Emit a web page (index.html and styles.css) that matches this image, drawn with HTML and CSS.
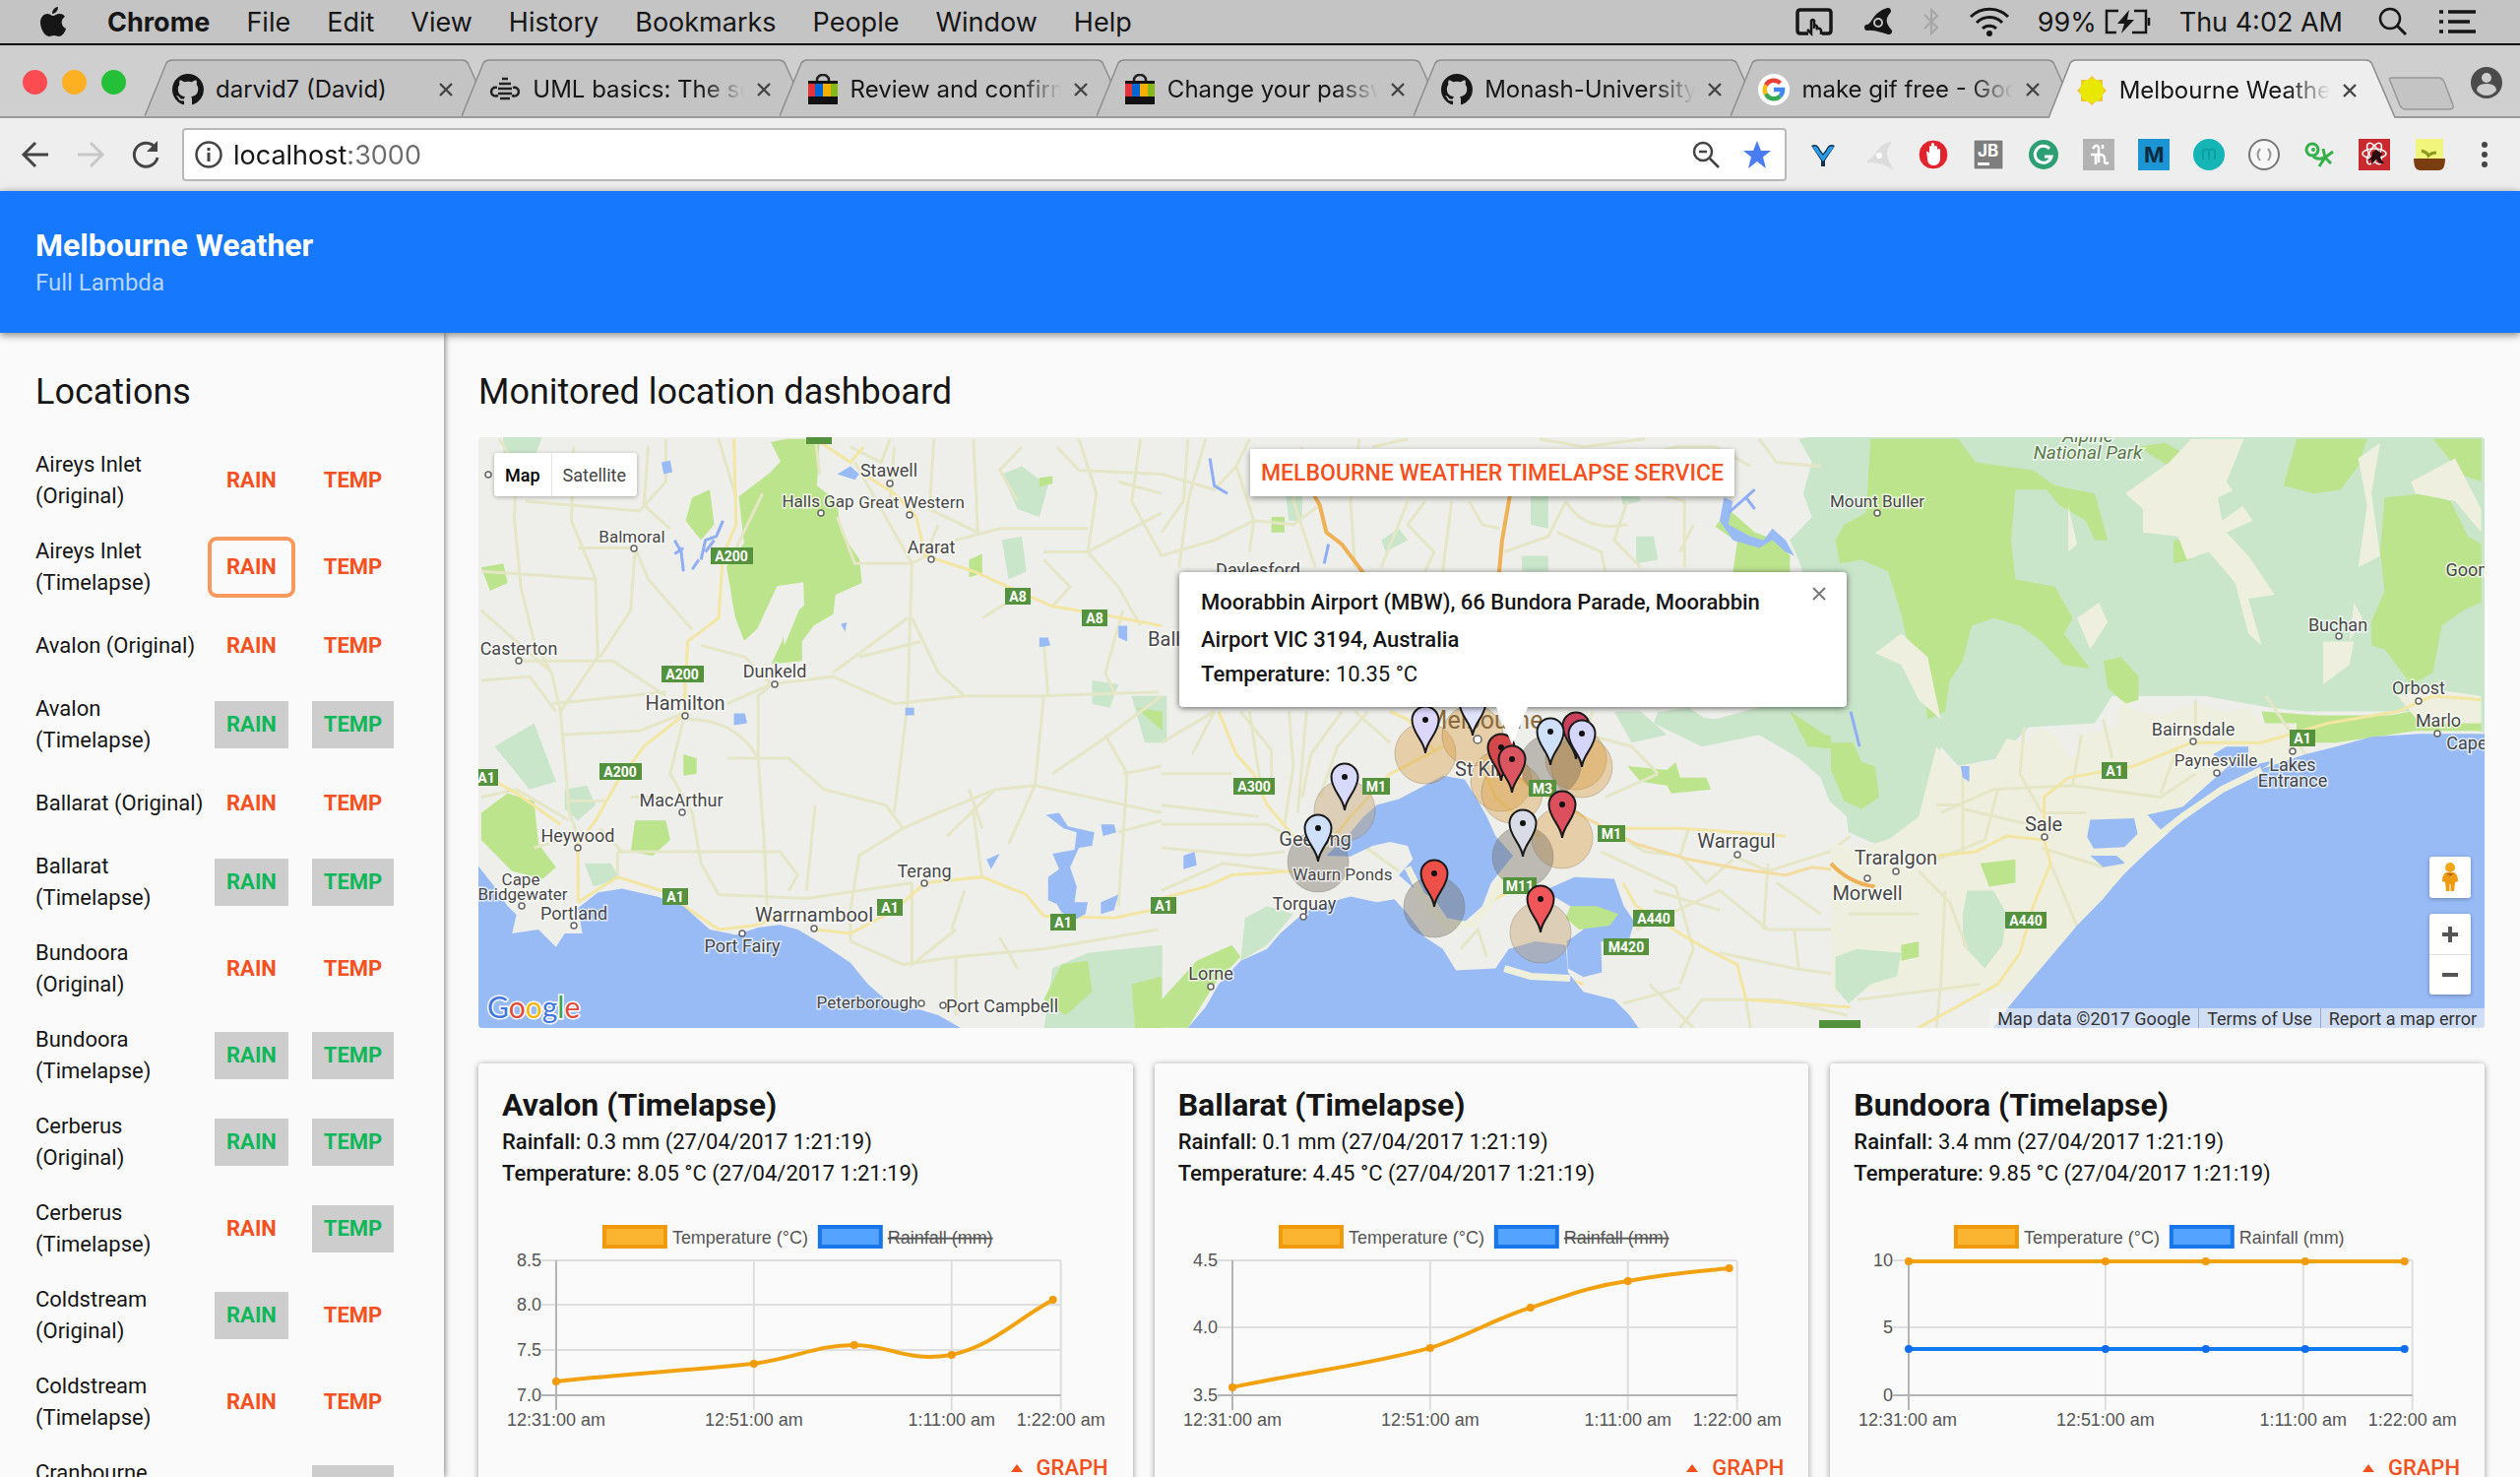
FILE: index.html
```html
<!DOCTYPE html>
<html lang="en">
<head>
<meta charset="utf-8">
<title>Melbourne Weather</title>
<link rel="stylesheet" href="styles.css">
</head>
<body>
<svg class="defs" aria-hidden="true">
  <defs>
    <symbol id="close" viewBox="0 0 16 16"><path d="M2 2l12 12M14 2L2 14" stroke="#444" stroke-width="2.4" fill="none"/></symbol>
    <symbol id="tab-shape" viewBox="0 0 352 58" preserveAspectRatio="none"><path d="M0 58L22 4Q24 1 28 1H322Q326 1 328 4L352 58" stroke="#8e8e8e" stroke-width="1.5"/></symbol>
    <symbol id="github" viewBox="0 0 16 16"><path fill="#161616" d="M8 0C3.58 0 0 3.58 0 8c0 3.54 2.29 6.53 5.47 7.59.4.07.55-.17.55-.38 0-.19-.01-.82-.01-1.49-2.01.37-2.53-.49-2.69-.94-.09-.23-.48-.94-.82-1.13-.28-.15-.68-.52-.01-.53.63-.01 1.08.58 1.23.82.72 1.21 1.87.87 2.33.66.07-.52.28-.87.51-1.07-1.78-.2-3.64-.89-3.64-3.95 0-.87.31-1.59.82-2.15-.08-.2-.36-1.02.08-2.12 0 0 .67-.21 2.2.82.64-.18 1.32-.27 2-.27s1.36.09 2 .27c1.53-1.04 2.2-.82 2.2-.82.44 1.1.16 1.92.08 2.12.51.56.82 1.27.82 2.15 0 3.07-1.87 3.75-3.65 3.95.29.25.54.73.54 1.48 0 1.07-.01 1.93-.01 2.2 0 .21.15.46.55.38A8.01 8.01 0 0 0 16 8c0-4.42-3.58-8-8-8z"/></symbol>
    <symbol id="bag" viewBox="0 0 32 32"><path d="M10 9V6a6 5 0 0 1 12 0v3" fill="none" stroke="#222" stroke-width="2.5"/><path d="M1 8h7v16H1z" fill="#e53238"/><path d="M8 8h8v16H8z" fill="#0064d2"/><path d="M16 8h8v16h-8z" fill="#f5af02"/><path d="M24 8h7v16h-7z" fill="#86b817"/><path d="M1 23h30v8H1zM1 7h30v3H1z" fill="#111"/></symbol>
    <symbol id="pin" viewBox="-16 -50 32 52" overflow="visible"><path d="M0 0C-1-13-13.500-20-13.500-34A13.500 13.500 0 1 1 13.500-34C13.500-20 1-13 0 0Z" stroke="#1a1a1a" stroke-width="2"/><circle cy="-34" r="3" fill="#111"/></symbol>
  </defs>
</svg>

<header class="menubar">
  <nav class="menus">
    <svg class="apple" viewBox="0 0 28 32"><path fill="#161616" d="M19 1c0 4-3 7-6 7 0-4 3-7 6-7zM14 10c2 0 3-2 7-2 2 0 4 1 5 3-5 3-4 10 1 12-1 4-4 8-7 8-2 0-3-1-5-1s-3 1-5 1c-5 0-9-9-9-14 0-6 4-9 7-9 3 0 4 2 6 2z"/></svg>
    <strong>Chrome</strong><span>File</span><span>Edit</span><span>View</span><span>History</span><span>Bookmarks</span><span>People</span><span>Window</span><span>Help</span>
  </nav>
  <div class="status">
    <svg width="38" height="30" viewBox="0 0 38 30"><path d="M13 27H5q-3 0-3-3V6q0-3 3-3h28q3 0 3 3v18q0 3-3 3h-6" fill="none" stroke="#161616" stroke-width="3.500"/><path d="M12 23l4 4V14q2-2 3 0v8-3q3-1 3 2v1q3-1 4 2v4" fill="none" stroke="#161616" stroke-width="2.500"/></svg>
    <svg width="34" height="32" viewBox="0 0 34 32"><path d="M7 22C15 21 13 9 28 5C22 12 22 18 29 26C21 24 14 21 7 22Z" fill="#161616" stroke="#161616" stroke-width="6" stroke-linejoin="round"/><circle cx="18" cy="17" r="4" fill="#161616" stroke="#c4c4c4" stroke-width="2"/></svg>
    <svg width="20" height="30" viewBox="0 0 20 30"><path d="M3 8l13 13-6 6V3l6 6L3 22" fill="none" stroke="#a6a6a6" stroke-width="2"/></svg>
    <svg width="42" height="30" viewBox="0 0 42 30"><g fill="none" stroke="#161616" stroke-width="3"><path d="M2 10a27 27 0 0 1 38 0"/><path d="M8 16a18 18 0 0 1 26 0"/><path d="M14 22a10 10 0 0 1 14 0"/></g><circle cx="21" cy="27" r="3" fill="#161616"/></svg>
    <span>99%</span>
    <svg class="battery" width="48" height="26" viewBox="0 0 48 26"><path d="M14 2H2v22h10M30 2h12v22H28M45 9v8" fill="none" stroke="#161616" stroke-width="2.500"/><path d="M25 1L13 15h7l-3 10 13-14h-7z" fill="#161616"/></svg>
    <span class="clock">Thu 4:02 AM</span>
    <svg class="search" width="30" height="30" viewBox="0 0 30 30"><circle cx="12" cy="12" r="10" fill="none" stroke="#161616" stroke-width="2.500"/><path d="M19 19l9 9" stroke="#161616" stroke-width="3"/></svg>
    <svg class="list" width="38" height="26" viewBox="0 0 38 26"><path d="M0 3h4M0 13h4M0 23h4M9 3h28M9 13h22M9 23h28" stroke="#161616" stroke-width="3.500"/></svg>
  </div>
</header>

<div class="tabstrip">
  <div class="lights"><i class="red"></i><i class="amber"></i><i class="green"></i></div>
  <div class="tabs">
    <div class="tab"><svg class="shape"><use href="#tab-shape"/></svg><svg class="fav"><use href="#github"/></svg><span>darvid7 (David)</span><button aria-label="Close tab"><svg><use href="#close"/></svg></button></div>
    <div class="tab"><svg class="shape"><use href="#tab-shape"/></svg><svg class="fav" viewBox="0 0 32 32"><g stroke="#222" stroke-width="2.500" fill="none"><path d="M10 10h12M9 15h14M9 20h14M11 25h10M13 5h6"/><path d="M8 14c-8-2-8 11 1 8M24 14c8-2 8 11-1 8"/></g></svg><span>UML basics: The sequence diagram</span><button aria-label="Close tab"><svg><use href="#close"/></svg></button></div>
    <div class="tab"><svg class="shape"><use href="#tab-shape"/></svg><svg class="fav"><use href="#bag"/></svg><span>Review and confirm details</span><button aria-label="Close tab"><svg><use href="#close"/></svg></button></div>
    <div class="tab"><svg class="shape"><use href="#tab-shape"/></svg><svg class="fav"><use href="#bag"/></svg><span>Change your password now</span><button aria-label="Close tab"><svg><use href="#close"/></svg></button></div>
    <div class="tab"><svg class="shape"><use href="#tab-shape"/></svg><svg class="fav"><use href="#github"/></svg><span>Monash-University projects</span><button aria-label="Close tab"><svg><use href="#close"/></svg></button></div>
    <div class="tab"><svg class="shape"><use href="#tab-shape"/></svg><svg class="fav" viewBox="0 0 32 32"><circle cx="16" cy="16" r="16" fill="#fff"/><g fill="none" stroke-width="4.500"><path d="M22.500 9.500A9 9 0 0 0 8 11.500" stroke="#ea4335"/><path d="M8 11.500a9 9 0 0 0 0 9" stroke="#fbbc05"/><path d="M8 20.500a9 9 0 0 0 14.500 2" stroke="#34a853"/><path d="M22.500 22.500A9 9 0 0 0 25 16h-9" stroke="#4285f4"/></g></svg><span>make gif free - Google Search</span><button aria-label="Close tab"><svg><use href="#close"/></svg></button></div>
    <div class="tab active"><svg class="shape"><use href="#tab-shape"/></svg><svg class="fav" viewBox="0 0 32 32"><path d="M16 1l4 4 7 0v7l4 4-4 4v7l-7 0-4 4-4-4-7 0v-7l-4-4 4-4V5l7 0z" fill="#f3c13a"/><circle cx="16" cy="16" r="12" fill="#e8e800"/></svg><span>Melbourne Weather</span><button aria-label="Close tab"><svg><use href="#close"/></svg></button></div>
  </div>
  <button class="newtab" aria-label="New tab"><svg width="70" height="34" viewBox="0 0 70 34"><path d="M3 4q-2-3 2-3h47q4 0 6 4l9 24q1 4-4 4H19q-4 0-6-4z" fill="#c4c4c4" stroke="#989898" stroke-width="1.500"/></svg></button>
  <svg class="profile" viewBox="0 0 32 32"><circle cx="16" cy="16" r="16" fill="#4b4b4b"/><circle cx="16" cy="11" r="5" fill="#cdcdcd"/><path d="M6 24q0-7 10-7t10 7q-4 5-10 5T6 24z" fill="#cdcdcd"/></svg>
</div>

<div class="toolbar">
  <button aria-label="Back"><svg viewBox="0 0 32 32"><path d="M29 16H4M16 4L4 16l12 12" fill="none" stroke="#444" stroke-width="3"/></svg></button>
  <button aria-label="Forward"><svg viewBox="0 0 32 32"><path d="M3 16h25M16 4l12 12-12 12" fill="none" stroke="#c8c8c8" stroke-width="3"/></svg></button>
  <button aria-label="Reload"><svg viewBox="0 0 32 32"><path d="M26 9a12 12 0 1 0 2 10" fill="none" stroke="#444" stroke-width="3"/><path d="M28 2v11H17z" fill="#444"/></svg></button>
  <div class="omnibox">
    <svg viewBox="0 0 28 28"><circle cx="14" cy="14" r="12.500" fill="none" stroke="#444" stroke-width="2.500"/><path d="M14 12v9M14 7v3" stroke="#444" stroke-width="3"/></svg>
    <input class="url" type="text" value="localhost:3000" aria-label="Address">
    <svg viewBox="0 0 28 28"><circle cx="11" cy="11" r="9" fill="none" stroke="#444" stroke-width="2.500"/><path d="M7 11h8M18 18l9 9" stroke="#444" stroke-width="2.500"/></svg>
    <svg viewBox="0 0 28 28" class="star"><path d="M14 0l4 10h10l-8 6.500L23 28l-9-7-9 7 3-11.500L0 10h10z" fill="#4a7df4"/></svg>
  </div>
  <div class="ext">
    <svg viewBox="0 0 32 32"><path d="M4 7q6-3 9 4l3 4 3-4q3-7 9-4l-10 15v6h-4v-6z" fill="#12324e"/><path d="M5 8q5-2 7 4l4 5 4-5q2-6 7-4L16 23z" fill="#2a9be6"/></svg>
    <svg viewBox="0 0 32 32"><path d="M5 23C15 22 13 9 27 5C22 12 22 18 28 28C21 24 14 22 5 23Z" fill="#dcdcdc" stroke="#dcdcdc" stroke-width="3"/><circle cx="17" cy="17" r="3" fill="#fff"/></svg>
    <svg viewBox="0 0 32 32"><circle cx="16" cy="16" r="15" fill="#e0252f" stroke="#fff"/><path d="M9 13q2-1 3 2V8q1-2 2 0V5q1-2 3 0v3q1-2 3 0v3q2-2 3 0v10q-1 6-7 6t-6-7z" fill="#fff"/></svg>
    <svg viewBox="0 0 32 32"><path d="M1 1h30v30H1z" fill="#7e7e7e" stroke="#fff"/><text x="5" y="18" class="glyph" font-size="17" fill="#fff">JB</text><path d="M5 24h12v3H5z" fill="#fff"/></svg>
    <svg viewBox="0 0 32 32"><circle cx="16" cy="16" r="15" fill="#2e9f74"/><path d="M22 10a8.500 8.500 0 1 0 2 8h-7" fill="none" stroke="#fff" stroke-width="3"/></svg>
    <svg viewBox="0 0 32 32"><path d="M0 0h32v32H0z" fill="#b3b3b3"/><path d="M10 10q4-6 6-1v15M8 16h10q5 0 4 8 1 2 4 0M20 6v4M13 16v10" fill="none" stroke="#fff" stroke-width="2.500"/></svg>
    <svg viewBox="0 0 32 32"><path d="M0 0h32v32H0z" fill="#1b95d3"/><text x="6" y="24" class="glyph" font-size="22" fill="#0c2c40">M</text></svg>
    <svg viewBox="0 0 32 32"><circle cx="16" cy="16" r="16" fill="#16b5b5"/><path d="M10 21V12q3-3 6 0v9M16 12q3-3 6 0v9" fill="none" stroke="#0b9ea6" stroke-width="2"/></svg>
    <svg viewBox="0 0 32 32"><circle cx="16" cy="16" r="15" fill="#f7f7f7" stroke="#777" stroke-width="2"/><path d="M12 10q-5 6 0 12M20 10q5 6 0 12" fill="none" stroke="#999" stroke-width="2"/></svg>
    <svg viewBox="0 0 32 32"><g fill="none" stroke="#36b04a" stroke-width="3"><circle cx="9" cy="11" r="6"/><path d="M10 18q5 4 12 1M16 28l6-9M20 10l2 9 8-6M22 19l6 6"/></g><circle cx="10" cy="11" r="2" fill="#36b04a"/></svg>
    <svg viewBox="0 0 32 32"><path d="M0 0h32v32H0z" fill="#c92a2f"/><g fill="none" stroke="#fff" stroke-width="1.500"><ellipse cx="16" cy="15" rx="12" ry="5"/><ellipse cx="16" cy="15" rx="12" ry="5" transform="rotate(60 16 15)"/><ellipse cx="16" cy="15" rx="12" ry="5" transform="rotate(120 16 15)"/></g><path d="M14 14l4-3 6 4-2 4 4 6h-4l-4-4-5 5v-5l-4 1 5-5z" fill="#2b0d0f"/></svg>
    <svg viewBox="0 0 32 32"><path d="M2 0h28v20H2z" fill="#f1f57c"/><path d="M8 12q6 2 7 5 3-3 8-3" fill="none" stroke="#8b9a1e" stroke-width="3"/><path d="M0 20h32q0 12-6 12H6q-6 0-6-12z" fill="#7a3d10"/></svg>
  </div>
  <button class="more" aria-label="Menu"><svg viewBox="0 0 32 32"><circle cx="16" cy="6" r="3"/><circle cx="16" cy="16" r="3"/><circle cx="16" cy="26" r="3"/></svg></button>
</div>

<div class="app">
  <header class="appbar"><h1>Melbourne Weather</h1><p>Full Lambda</p></header>
  <div class="columns">
    <aside class="sidebar">
      <h2>Locations</h2>
      <ul>
        <li><span>Aireys Inlet (Original)</span><button>RAIN</button><button>TEMP</button></li>
        <li><span>Aireys Inlet (Timelapse)</span><button class="focus">RAIN</button><button>TEMP</button></li>
        <li><span>Avalon (Original)</span><button>RAIN</button><button>TEMP</button></li>
        <li><span>Avalon (Timelapse)</span><button class="on">RAIN</button><button class="on">TEMP</button></li>
        <li><span>Ballarat (Original)</span><button>RAIN</button><button>TEMP</button></li>
        <li><span>Ballarat (Timelapse)</span><button class="on">RAIN</button><button class="on">TEMP</button></li>
        <li><span>Bundoora (Original)</span><button>RAIN</button><button>TEMP</button></li>
        <li><span>Bundoora (Timelapse)</span><button class="on">RAIN</button><button class="on">TEMP</button></li>
        <li><span>Cerberus (Original)</span><button class="on">RAIN</button><button class="on">TEMP</button></li>
        <li><span>Cerberus (Timelapse)</span><button>RAIN</button><button class="on">TEMP</button></li>
        <li><span>Coldstream (Original)</span><button class="on">RAIN</button><button>TEMP</button></li>
        <li><span>Coldstream (Timelapse)</span><button>RAIN</button><button>TEMP</button></li>
        <li><span>Cranbourne (Original)</span><button>RAIN</button><button class="on">TEMP</button></li>
      </ul>
    </aside>
    <main class="main">
      <h2>Monitored location dashboard</h2>
      <section class="map" aria-label="Map">
        <svg class="canvas" viewBox="0 0 2038 600" preserveAspectRatio="xMidYMid slice">
          <rect width="2038" height="600" fill="#eeeeea"/>
          <!-- western tile -->
          <g class="tile" transform="translate(-6 -14) scale(.4464 .3954)">
            <g class="pale">
              <path d="M50 830l90-60 30 90 20 60-60 20-50-70zM210 940l50-10 20 50-40 40-30-30zM255 1130l60 0 20 40-60 20zM1205 130l45-20 60 50-20 80-50-20zM1205 300l45-10 10 90-40 20zM1500 700l80 0v120h-50zM1320 1400l80-40 170-20v220h-270zM70 30l90 0-20 60-70-10zM1410 660l60 10-20 60-40-10z"/>
            </g>
            <g class="wood">
              <path d="M715 40h75l-6 120 45 40 10 80 42 70 5 60-60 30-5 50-45 30-26 40v50l-70 8 25-60 5-50 45-40-2-60-60 10-45 110-30 30-20-60-20-130 40-60-12-120 70-60 25-30-22-50z"/>
              <path d="M500 190l40-20 10 90-30 40-35-50zM20 1000l60-50 60 20 10 110 40 60-30 30-70-20-70-80zM370 1020l70 0 10 50-40 40-50-10zM480 850l30 10v40l-30 5zM20 370l50-10 10 50-40 20zM1340 1390l60-10 10 80-60 60-50-40zM1500 1440l68-20v140h-60zM1290 140l30-5v20l-30 8zM1130 350l30-15v50l-30 10zM1510 730l60 10v50z"/>
            </g>
            <path class="bare" d="M700 500l50-40-40 110z"/>
            <g class="minor">
              <path d="M60 40L100 110 95 240 110 420 140 560 180 640 200 740 210 860 220 1000 240 1060M230 60L225 250 280 400 285 600 200 740M120 200L380 225 440 150 440 40M370 320L400 400 500 530M370 320L360 480 290 600M400 60l-10 150 60 60M560 40l40 150M110 610L320 610 440 700M180 720L440 690M200 800L380 790 490 740M480 760L450 900 500 1000 520 1130 560 1210M490 760Q600 760 650 860M650 860L650 700 680 670M650 860L665 1100 670 1240M580 860L720 860 800 940 940 980 980 1040M680 670L820 650 960 720 1120 700 1300 700 1560 690M520 570L620 600 680 670M580 720L680 670M820 640L990 500M1000 360L990 720 960 1000M1000 500L1060 640 1120 700M980 1040L880 1110 860 1250 860 1330M980 1040L1060 1000 1190 940 1280 930 1568 1000M1300 700L1280 930 1220 1080M1140 1000L1160 1170M780 980L760 1200M330 1100L700 1100 740 1160 720 1200M330 1100L330 1160M500 1100L400 1100M560 1210L760 1220 1000 1180M1000 1180L1000 1390 1100 1300M860 1330L980 1390 1100 1370 1300 1350 1560 1300M1100 1370L1100 1520M1200 1320L1240 1400M860 60L930 100 950 40M830 240L870 360 1000 360M870 100L1000 360 1100 300 1200 270 1400 270M1300 330L1400 330 1568 230M1140 40L1150 280M1380 40L1420 180 1400 330 1470 420 1520 520M1470 150L1568 180M1320 470L1360 420 1300 350M1520 40L1500 200 1568 340M1440 800L1490 900 1470 1240M1320 900L1450 800 1568 700M1190 940L1080 1060M360 960L440 960M280 400L20 380M20 480L180 640M20 960L100 940 220 1020"/>
              <path d="M20 660L130 650 190 740M240 320L370 320M300 970L220 970M660 180L600 320M1060 260L1030 340M1250 60L1200 120 1240 200M1330 60L1380 120 1568 130M1300 560L1310 700M1160 500L1260 430M1020 560L880 600M1120 1200L1090 1300M1480 480L1440 640 1460 690M1568 880L1480 900M1160 1040L1130 940M780 40L790 130M960 60L950 200M1050 40L1040 220 1150 280M140 1090L230 1060M290 1040L340 1100M1470 1050L1568 1020"/>
            </g>
            <g class="major">
              <path d="M595 40L600 260 570 340 560 500 490 560 480 750 390 830 330 920 280 1020 240 1080 240 1230M20 900L100 950 200 1030M240 1230L330 1165 430 1200 560 1300 640 1290 720 1260M780 1300L860 1310 960 1250 1030 1180 1160 1165 1260 1210 1300 1265 1460 1270 1568 1245M780 40L860 100 890 60M890 130L960 180 1010 240 1030 340 1140 380 1240 430 1320 470 1430 490 1568 520"/>
            </g>
            <g class="water">
              <path d="M14 1138L50 1190 80 1240 100 1262 90 1310 150 1300 190 1345 210 1310 250 1310 240 1245 285 1205 340 1195 420 1215 480 1240 540 1300 600 1314 650 1295 700 1288 740 1300 800 1340 860 1385 900 1440 940 1480 1000 1500 1060 1520 1110 1552 1120 1600H0V1138z"/>
              <path d="M1305 1005l30-5 20 35 60 15-5 35-30 5-20 50 15 50-5 40 30 0-5 30-25 15-30-20-10-20-20-10 0-60 25-20-15-40 50-10 5-45-30-10zM1430 1030l30 0 5 20-30 10zM1430 1230l40-20-10 40-30 10zM1170 1120l30-15-20 40zM830 130l30-20 20 20-10 15zM430 100l20-5 5 30-20 5zM1470 520l20 0v40l-20-10zM1290 550l20 0 5 20-25 5zM985 730h20v20h-20zM595 745l25 0 5 25-30 5zM838 515l14-4-4 24z"/>
            </g>
            <path class="stream" d="M570 250l-15 40-25 10-10 50M550 300l-20 30M460 300l15 30 5 50M500 375l15-25M480 320l-20 15"/>
          </g>
          <!-- central tile -->
          <g class="tile" transform="translate(694 -14) scale(.4464 .3954)">
            <g class="pale">
              <path d="M1500 30h80v1000l-60-60-20-60-50-50-90-60-130 30-110-60 10-30 130 20 130-40 90-10-50-90 30-80-20-60 30-60-20-70-20-50 50-60-20-60 20-80-30-60zM1140 740l60-10 40 30-80 20zM1030 740l60 0 60 60-80 20zM500 300l40-30 20 30-50 30zM1080 290l40 0 10 60-50 10zM1040 160l40-10 10 50-40 10zM820 340l60 0v40h-60zM840 180l40 0 0 90-40-10zM280 160l40 10 0 80-30 0zM190 1270l50-30 60 20-60 80-60 40z"/>
            </g>
            <g class="wood">
              <path d="M1290 220l60 60 50 20 30 40v45h-130l10-80-50-40zM0 1480L80 1380 160 1340 180 1370 120 1440 60 1552H0zM1060 880l90 10 20-20 10 40 60 0 10 30-90 10-10-20-60-10zM1430 740l80 60 60 10v30l-100-10zM250 240h30v40h-30z"/>
            </g>
            <g class="minor">
              <path d="M60 40L50 200 0 280M100 40L60 200 40 370M200 40L170 110 210 250 200 330M320 60L300 200 350 370M450 40L430 200 440 370M560 200L500 370M600 200L560 260 620 330 600 380M660 200L640 380M860 40L960 60 1100 40M920 200Q960 280 1060 260M1060 200L1030 300 1090 370M900 280L1000 330 1010 380M1170 60L1130 180 1190 200 1190 370M1210 260L1180 330M1360 40L1400 100 1500 110M180 740L250 840 250 920M290 740L300 880 280 1030M410 740L340 850 320 960M470 740L400 830 360 960M0 900L160 900M0 1030L240 1030 290 1060M0 1090L200 1110 280 1100M120 740L70 850M0 1200L140 1130 280 1150M0 820L60 780 120 740M430 1060L540 1150M540 1000L460 1080M980 740L970 800 1070 830 1130 900M1000 1100L1170 1190 1210 1350 1180 1440M1030 1050L1100 1100 1180 1110M1080 1300L1270 1200 1380 1300 1560 1300M1120 1200L1270 1250M1180 1110L1240 1180 1300 1120M1380 1130L1370 1300M1270 1360L1440 1400 1568 1420M1180 1552L1230 1480 1400 1480 1560 1520M1050 1490L1180 1450M1300 1110L1380 1150 1520 1100 1568 1060M680 1350L720 1300 740 1370"/>
              <path d="M0 130L120 170 170 110M0 340L120 300 210 250 300 260 360 210M480 60L560 40M700 200L730 260 770 270M780 330L880 290 920 200M1100 80L1170 60 1260 60 1340 110M200 740L230 960M330 740L310 1000M0 980L220 1010M1130 900L1010 960M1180 1110L1200 1040M1400 1180L1500 1260M1440 1300L1450 1400M1330 1480L1340 1552M1110 1440L1210 1552M440 740L520 820"/>
            </g>
            <g class="major">
              <path d="M130 740L170 850 210 900 240 980 300 1060M0 1220L100 1190 160 1160 300 1150M350 1120L430 1010 520 900 640 830M720 860L760 960 860 1060M700 1290L760 1220 850 1170M780 1400L900 1420 960 1440M1050 1180L1080 1240 1180 1310 1240 1350 1310 1390 1330 1480 1568 1500M1000 1040L1180 1040 1420 1060M520 740L560 760 620 840"/>
            </g>
            <path class="freeway" d="M340 170L360 210 375 280 410 310 460 385M795 170L775 300 768 385"/>
            <path class="freeway soft" d="M750 860L850 940 960 1010 1080 1080 1200 1120 1320 1145 1420 1160 1480 1140 1568 1150"/>
            <g class="water">
              <path d="M60 1552L100 1500 130 1440 180 1380 240 1350 270 1310 310 1270 350 1240 430 1215 490 1230 530 1222 560 1260 600 1320 640 1350 670 1405 760 1400 790 1350 850 1330 920 1340 925 1410 960 1460 1030 1480 1065 1520 1085 1552V1600H40z"/>
              <path d="M590 935L640 905 690 915 715 960 740 1010 760 1060 800 1110 750 1180 730 1240 690 1280 650 1270 620 1220 570 1190 540 1160 572 1120 560 1085 520 1075 480 1085 430 1112 375 1110 430 1050 460 1010 490 980 540 965z"/>
              <path d="M870 1200L940 1165 1030 1170 1052 1240 1076 1280 1060 1340 1000 1330 1002 1410 960 1422 925 1400 922 1330 960 1300 930 1240z"/>
              <path d="M1280 190l20 10-10 60 50 30 30 10 20-30 30 30 20 40-20-10-30-30-30 20-60-20-30-50zM50 1110l25-10 5 35-30 10z"/>
            </g>
            <path class="stream" d="M110 90l10 70 30 20M1290 230l60-60M1330 190l20 30M380 310l-10 50"/>
            <path class="wood" d="M930 1240l60 0 50 20-20 30-70 10-30-30z"/>
            <path class="shore" d="M560 1140l40 90 50 60 60-5 40-60 30-70M780 1400l60 20 90 5"/>
          </g>
          <!-- eastern tile -->
          <g class="tile" transform="translate(1374 -14) scale(.4464 .3954)">
            <path class="pale" d="M0 30H1500V800L1340 740 1080 740 1000 730 850 700 640 700 600 770 450 780 380 860 290 880 250 830 240 950 200 1040 100 1080 40 1050 30 960 0 900z"/>
            <g class="wood">
              <path d="M90 40h200l40 60 130 20 50 40 90 20 30 120-30 0-20-50-60-40-30-40-70 0-10 130 10 100 90 20 40 80-20 40 60 90-60-10-50-60-50-40-60-20-50 20-20 90-30 50-10 80-40 20-10-100-30-70-20-100-30-110-60-30-50 10-10-60 20-40 50-30z"/>
              <path d="M1060 40h160l-20 70-40 60-60 10-70-20zM1370 40h110v110l-50-20-30-50zM1260 190l90-10 60 20 40 90 30 20v150l-40 20-50 40-20 120-50 30-60-90-30-10 0-60 30-80-10-100zM620 610l40-10 40 50 0 60-30 10-40-40zM780 300h40v50l-40 10zM0 820l50 0 20 50 30 10 10 80-40 30-40-20-30-80zM340 1130l80-10 0 60-60 10z"/>
              <path d="M980 740l130 10 160 0 100-20 110 30v30h-150l-180 30-150 0zM700 60l60-10 50 30-40 30zM210 560l50 20-10 60-40-20z"/>
            </g>
            <g class="vale">
              <path d="M820 40h120l-40 110 60 100-60 30 50 60 60 100-60 10 30 120-30-30-30-130-60-80-50 20-20-60-80-10 0-60-40-40 100-80zM1200 90l50-40-20 130 20 160-50 30 20-160zM1320 150l100-60 60 130v60l-60-80-90-20zM560 500l50-40 20 50-40 70zM100 590l60-50 60 60 30 160-50-50-40-90zM540 210l20 100-20 20zM1120 560l70 0-10 60-60 50zM1190 460l20 40-30 60zM1290 700l60-20 130 20v70l-140 0zM240 830l40 50 90-10 30-60 50 10 20-40 40 20 30 60 30-10-10-50 40-10 50-10 10-70 40 30 50 10 80-30 60 20 60-10 30 40 80 0-10 150-230 60-120 130-240 350H0V1080l60 10 70-20 70-60z"/>
            </g>
            <path class="pale" d="M310 1200l60 0 30 60-10 80-40 60-50-60 0-80zM10 1370l50-20 100 10-10 60-60 20-50 50-30-40zM880 190l40-20 20 40-50 40z"/>
            <path class="wood" d="M340 1130l80-10 0 60-60 10zM160 1340l40-10 0 40-40 10z"/>
            <g class="minor">
              <path d="M250 1000L370 940 550 930 750 960 830 900M240 980l60 0 0 120M380 940L350 1070 240 1120M440 780L430 900 480 1000M550 930L570 800M490 1000L580 1000M480 1090L620 1140M500 1130L560 1290M260 1200L250 1440 240 1552M200 1150L270 1230 310 1350M40 1260L200 1260M60 1480L340 1440M750 950L790 830M1080 850L990 700M620 760L640 860M830 710L830 800M300 900l0 90 150 40"/>
            </g>
            <g class="major">
              <path d="M240 1110L330 1100 400 1060 485 1070 500 1130 460 1240 430 1360 380 1440 200 1552M485 1070L485 960 540 910 690 880 820 820 980 820 1130 770 1290 740 1370 700 1480 710"/>
            </g>
            <path class="freeway" d="M0 1130Q40 1180 100 1190"/>
            <g class="water">
              <path d="M400 1505L440 1450 500 1370 560 1290 620 1220 660 1165 720 1100 800 1020 880 950 960 895 1080 850 1150 830 1230 805 1340 797H1500V1600H340z"/>
              <path d="M590 1018l100-4 8 40-30 34-70 4-15-30zM590 1110l60 0 20 20-50 10zM720 1005l80-20 60-60 60-60 50 10 40-10-50 40-80 70-120 80zM870 850l30-20 50 0 0 20-60 20zM295 880l20 0v40l-15-10z"/>
            </g>
            <path class="shore" d="M640 1180l60-80 100-90 90-70 90-50"/>
            <path class="stream" d="M45 740l20 90"/>
          </g>
          <g class="halo">
            <g fill="#d89a3c"><circle cx="962" cy="321" r="31"/><circle cx="1010" cy="303" r="31"/><circle cx="1039" cy="349" r="31"/><circle cx="1050" cy="361" r="31"/><circle cx="1115" cy="327" r="31"/><circle cx="1121" cy="335" r="31"/><circle cx="1101" cy="407" r="31"/></g>
            <g fill="#c39b66"><circle cx="880" cy="379" r="31"/><circle cx="1079" cy="503" r="31"/></g>
            <g fill="#6e665c"><circle cx="1089" cy="333" r="31"/><circle cx="1061" cy="426" r="31"/><circle cx="853" cy="431" r="31"/><circle cx="971" cy="477" r="31"/></g>
          </g>
          <g class="places">
            <text x="-10" y="30">nh</text><text x="417" y="40">Stawell</text><text x="345" y="71" class="small">Halls Gap</text><text x="440" y="72" class="small">Great Western</text><text x="156" y="107" class="small">Balmoral</text><text x="460" y="118">Ararat</text><text x="41" y="221">Casterton</text><text x="301" y="244">Dunkeld</text><text x="210" y="277" class="big">Hamilton</text><text x="206" y="375">MacArthur</text><text x="101" y="411">Heywood</text><text x="43" y="455" class="small">Cape</text><text x="45" y="470" class="small">Bridgewater</text><text x="97" y="490">Portland</text><text x="268" y="523">Port Fairy</text><text x="341" y="492" class="big">Warrnambool</text><text x="453" y="447">Terang</text><text x="395" y="580" class="small">Peterborough</text><text x="532" y="584">Port Campbell</text><text x="714" y="212" class="big">Ballarat</text><text x="792" y="141">Daylesford</text><text x="1421" y="71" class="small">Mount Buller</text><text x="1022" y="296" class="city">Melbourne</text><text x="1026" y="344" class="big">St Kilda</text><text x="850" y="415" class="big">Geelong</text><text x="878" y="450" class="small">Waurn Ponds</text><text x="839" y="480">Torquay</text><text x="744" y="551">Lorne</text><text x="1278" y="417" class="big">Warragul</text><text x="1440" y="434" class="big">Traralgon</text><text x="1411" y="470" class="big">Morwell</text><text x="1590" y="400" class="big">Sale</text><text x="1742" y="303">Bairnsdale</text><text x="1765" y="334" class="small">Paynesville</text><text x="1843" y="339">Lakes</text><text x="1843" y="355">Entrance</text><text x="1889" y="197">Buchan</text><text x="1971" y="261">Orbost</text><text x="1991" y="294">Marlo</text><text x="2028" y="317">Cape C</text><text x="2030" y="141">Goongo</text>
            <text x="1635" y="5" class="park">Alpine</text><text x="1635" y="22" class="park">National Park</text>
          </g>
          <g class="dots">
            <circle cx="10" cy="38" r="3"/><circle cx="418" cy="47" r="3"/><circle cx="348" cy="77" r="3"/><circle cx="438" cy="79" r="3"/><circle cx="158" cy="113" r="3"/><circle cx="460" cy="124" r="3"/><circle cx="41" cy="227" r="3"/><circle cx="301" cy="251" r="3"/><circle cx="210" cy="283" r="3"/><circle cx="207" cy="381" r="3"/><circle cx="101" cy="417" r="3"/><circle cx="44" cy="476" r="3"/><circle cx="97" cy="496" r="3"/><circle cx="268" cy="504" r="3"/><circle cx="341" cy="499" r="3"/><circle cx="453" cy="453" r="3"/><circle cx="450" cy="575" r="3"/><circle cx="472" cy="577" r="3"/><circle cx="1421" cy="77" r="3"/><circle cx="838" cy="487" r="3"/><circle cx="744" cy="558" r="3"/><circle cx="1279" cy="424" r="3"/><circle cx="1440" cy="441" r="3"/><circle cx="1411" cy="448" r="3"/><circle cx="1591" cy="406" r="3"/><circle cx="1742" cy="309" r="3"/><circle cx="1766" cy="341" r="3"/><circle cx="1843" cy="319" r="3"/><circle cx="1890" cy="202" r="3"/><circle cx="1971" cy="268" r="3"/><circle cx="1990" cy="301" r="3"/><circle cx="1015" cy="307" r="4"/>
          </g>
          <g class="shields">
            <g><path d="M236 112h43v17h-43zM186 232h43v17h-43zM123 331h43v17h-43zM-5 337h25v17H-5zM187 458h26v17h-26zM405 469h26v17h-26zM581 484h26v17h-26zM683 467h26v17h-26zM535 153h26v17h-26zM613 175h26v17h-26zM333-10h26v17h-26zM767 346h42v17h-42zM898 346h28v17h-28zM1067 348h28v17h-28zM1137 394h28v17h-28zM1041 447h34v17h-34zM1173 480h42v17h-42zM1143 509h46v17h-46zM1362 592h42v17h-42zM1649 330h26v17h-26zM1840 297h26v17h-26zM1551 482h42v17h-42z"/></g>
            <text x="257" y="126">A200</text><text x="207" y="246">A200</text><text x="144" y="345">A200</text><text x="8" y="351">A1</text><text x="200" y="472">A1</text><text x="418" y="483">A1</text><text x="594" y="498">A1</text><text x="696" y="481">A1</text><text x="548" y="167">A8</text><text x="626" y="189">A8</text><text x="788" y="360">A300</text><text x="912" y="360">M1</text><text x="1081" y="362">M3</text><text x="1151" y="408">M1</text><text x="1058" y="461">M11</text><text x="1194" y="494">A440</text><text x="1166" y="523">M420</text><text x="1662" y="344">A1</text><text x="1853" y="311">A1</text><text x="1572" y="496">A440</text>
          </g>
          <g class="pins">
            <use href="#pin" x="994" y="253" width="32" height="52" fill="#dfe3fb"/>
            <use href="#pin" x="946" y="271" width="32" height="52" fill="#dcd6fb"/>
            <use href="#pin" x="1099" y="277" width="32" height="52" fill="#c9415c"/>
            <use href="#pin" x="1073" y="283" width="32" height="52" fill="#cfe0fb"/>
            <use href="#pin" x="1105" y="285" width="32" height="52" fill="#d5d6fb"/>
            <use href="#pin" x="1023" y="299" width="32" height="52" fill="#d4474a"/>
            <use href="#pin" x="1034" y="311" width="32" height="52" fill="#da5560"/>
            <use href="#pin" x="864" y="329" width="32" height="52" fill="#d8dafb"/>
            <use href="#pin" x="1085" y="357" width="32" height="52" fill="#dd4f5c"/>
            <use href="#pin" x="1045" y="376" width="32" height="52" fill="#d9dbe6"/>
            <use href="#pin" x="837" y="381" width="32" height="52" fill="#cfe0fb"/>
            <use href="#pin" x="955" y="427" width="32" height="52" fill="#ee4f49"/>
            <use href="#pin" x="1063" y="453" width="32" height="52" fill="#f0565a"/>
          </g>
          <text class="google" x="9" y="590"><tspan fill="#3f78e0">G</tspan><tspan fill="#e2493b">o</tspan><tspan fill="#f3b605">o</tspan><tspan fill="#3f78e0">g</tspan><tspan fill="#35a354">l</tspan><tspan fill="#e2493b">e</tspan></text>
        </svg>
        <div class="maptype"><button class="current">Map</button><button>Satellite</button></div>
        <button class="service">MELBOURNE WEATHER TIMELAPSE SERVICE</button>
        <div class="info">
          <h3>Moorabbin Airport (MBW), 66 Bundora Parade, Moorabbin Airport VIC 3194, Australia</h3>
          <p><b>Temperature:</b> 10.35 °C</p>
          <button aria-label="Close"><svg viewBox="0 0 16 16"><path d="M2 2l12 12M14 2L2 14" stroke="#777" stroke-width="2" fill="none"/></svg></button>
        </div>
        <div class="controls">
          <button class="peg" aria-label="Street View"><svg width="18" height="30" viewBox="0 0 18 30"><circle cx="9" cy="5" r="5" fill="#f0a818"/><path d="M5 10h8q4 2 4 9l-3 1-1 9H9.500v-7h-1v7H5l-1-9-3-1q0-7 4-9z" fill="#ef9b12"/><path d="M5 11h8l-4 3z" fill="#b56a08"/></svg></button>
          <div class="zoom"><button aria-label="Zoom in"><svg viewBox="0 0 16 16"><path d="M0 8h16M8 0v16" stroke="#555" stroke-width="4"/></svg></button><button aria-label="Zoom out"><svg viewBox="0 0 16 16"><path d="M0 8h16" stroke="#555" stroke-width="4"/></svg></button></div>
        </div>
        <footer class="credits"><span>Map data ©2017 Google</span><a href="#terms">Terms of Use</a><a href="#report">Report a map error</a></footer>
      </section>
      <section class="cards">
        <article class="card">
          <h3>Avalon (Timelapse)</h3>
          <p><b>Rainfall:</b> 0.3 mm (27/04/2017 1:21:19)</p>
          <p><b>Temperature:</b> 8.05 °C (27/04/2017 1:21:19)</p>
          <svg class="chart" viewBox="0 0 616 220">
            <rect x="104" y="8" width="62" height="20" class="key-t"/><text x="173" y="25">Temperature (°C)</text>
            <rect x="323" y="8" width="62" height="20" class="key-r"/><text x="392" y="25" class="off">Rainfall (mm)</text>
            <path class="grid" d="M40 42H568M40 87H568M40 133H568M256 42V194M457 42V194M568 42V194"/><path class="axis" d="M40 179H568M55 42V194"/>
            <g text-anchor="end"><text x="40" y="48">8.5</text><text x="40" y="93">8.0</text><text x="40" y="139">7.5</text><text x="40" y="185">7.0</text></g>
            <g text-anchor="middle"><text x="55" y="210">12:31:00 am</text><text x="256" y="210">12:51:00 am</text><text x="457" y="210">1:11:00 am</text><text x="568" y="210">1:22:00 am</text></g>
            <path class="temp" d="M55 165C140 156 180 155 256 147C300 141 320 128 358 128C395 128 410 146 457 138C500 128 520 104 560 82"/>
            <g class="temp-dot"><circle cx="55" cy="165" r="4"/><circle cx="256" cy="147" r="4"/><circle cx="358" cy="128" r="4"/><circle cx="457" cy="138" r="4"/><circle cx="560" cy="82" r="4"/></g>
          </svg>
          <button class="graph"><svg viewBox="0 0 12 8"><path d="M0 8l6-8 6 8z" fill="#f4511e"/></svg>GRAPH</button>
        </article>
        <article class="card">
          <h3>Ballarat (Timelapse)</h3>
          <p><b>Rainfall:</b> 0.1 mm (27/04/2017 1:21:19)</p>
          <p><b>Temperature:</b> 4.45 °C (27/04/2017 1:21:19)</p>
          <svg class="chart" viewBox="0 0 616 220">
            <rect x="104" y="8" width="62" height="20" class="key-t"/><text x="173" y="25">Temperature (°C)</text>
            <rect x="323" y="8" width="62" height="20" class="key-r"/><text x="392" y="25" class="off">Rainfall (mm)</text>
            <path class="grid" d="M40 42H568M40 110H568M256 42V194M457 42V194M568 42V194"/><path class="axis" d="M40 179H568M55 42V194"/>
            <g text-anchor="end"><text x="40" y="48">4.5</text><text x="40" y="116">4.0</text><text x="40" y="185">3.5</text></g>
            <g text-anchor="middle"><text x="55" y="210">12:31:00 am</text><text x="256" y="210">12:51:00 am</text><text x="457" y="210">1:11:00 am</text><text x="568" y="210">1:22:00 am</text></g>
            <path class="temp" d="M55 171C130 155 190 149 256 131C295 119 315 104 358 90C395 78 420 68 457 63C500 55 520 54 560 50"/>
            <g class="temp-dot"><circle cx="55" cy="171" r="4"/><circle cx="256" cy="131" r="4"/><circle cx="358" cy="90" r="4"/><circle cx="457" cy="63" r="4"/><circle cx="560" cy="50" r="4"/></g>
          </svg>
          <button class="graph"><svg viewBox="0 0 12 8"><path d="M0 8l6-8 6 8z" fill="#f4511e"/></svg>GRAPH</button>
        </article>
        <article class="card">
          <h3>Bundoora (Timelapse)</h3>
          <p><b>Rainfall:</b> 3.4 mm (27/04/2017 1:21:19)</p>
          <p><b>Temperature:</b> 9.85 °C (27/04/2017 1:21:19)</p>
          <svg class="chart" viewBox="0 0 616 220">
            <rect x="104" y="8" width="62" height="20" class="key-t"/><text x="173" y="25">Temperature (°C)</text>
            <rect x="323" y="8" width="62" height="20" class="key-r"/><text x="392" y="25">Rainfall (mm)</text>
            <path class="grid" d="M40 42H568M40 110H568M256 42V194M457 42V194M568 42V194"/><path class="axis" d="M40 179H568M56 42V194"/>
            <g text-anchor="end"><text x="40" y="48">10</text><text x="40" y="116">5</text><text x="40" y="185">0</text></g>
            <g text-anchor="middle"><text x="55" y="210">12:31:00 am</text><text x="256" y="210">12:51:00 am</text><text x="457" y="210">1:11:00 am</text><text x="568" y="210">1:22:00 am</text></g>
            <path class="temp" d="M56 43H560"/>
            <path class="rain" d="M56 132H560"/>
            <g class="temp-dot"><circle cx="56" cy="43" r="4"/><circle cx="256" cy="43" r="4"/><circle cx="358" cy="43" r="4"/><circle cx="459" cy="43" r="4"/><circle cx="560" cy="43" r="4"/></g>
            <g class="rain-dot"><circle cx="56" cy="132" r="4"/><circle cx="256" cy="132" r="4"/><circle cx="358" cy="132" r="4"/><circle cx="459" cy="132" r="4"/><circle cx="560" cy="132" r="4"/></g>
          </svg>
          <button class="graph"><svg viewBox="0 0 12 8"><path d="M0 8l6-8 6 8z" fill="#f4511e"/></svg>GRAPH</button>
        </article>
      </section>
    </main>
  </div>
</div>
</body>
</html>
```
FILE: styles.css
```css
* { box-sizing: border-box; }
body {
  margin: 0;
  height: 100vh;
  overflow: hidden;
  display: flex;
  flex-direction: column;
  background: #fafafa;
  color: #161616;
  font-family: Roboto, "Liberation Sans", sans-serif;
}
button { border: 0; background: none; padding: 0; font: inherit; color: inherit; display: flex; align-items: center; justify-content: center; }
h1, h2, h3, p, ul { margin: 0; padding: 0; }
.defs { position: absolute; width: 0; height: 0; }

/* system menu bar */
.menubar, .tabstrip, .toolbar { font-family: Inter, "Liberation Sans", sans-serif; flex: none; }
.menubar {
  height: 46px;
  padding: 0 44px 0 40px;
  display: flex;
  align-items: center;
  justify-content: space-between;
  background: #c4c4c4;
  border-bottom: 2px solid #0a0a0a;
  font-size: 27px;
}
.menus { display: flex; align-items: center; gap: 37px; }
.apple { width: 28px; height: 32px; margin-right: 4px; }
.status { display: flex; align-items: center; gap: 28px; }
.battery { margin-left: -20px; }
.search { margin-left: 8px; }
.list { margin-left: 4px; }

/* tab strip */
.tabstrip { height: 74px; display: flex; align-items: flex-end; background: #cfcfcf; border-bottom: 2px solid #9a9a9a; }
.lights { display: flex; gap: 15px; width: 147px; padding: 2px 0 0 23px; align-self: center; }
.lights i { width: 25px; height: 25px; border-radius: 50%; }
.red { background: #fc4b51; }
.amber { background: #fdb022; }
.green { background: #24c138; }
.tabs { flex: 1; display: flex; min-width: 0; height: 58px; }
.tab { flex: 1; min-width: 0; position: relative; display: flex; align-items: center; padding: 4px 38px 0 28px; font-size: 24px; }
.tab + .tab { margin-left: -30px; }
.tab > * { position: relative; }
.tab .shape { position: absolute; left: 0; top: 0; width: 100%; height: 100%; fill: #c4c4c4; }
.tab.active { margin-bottom: -2px; }
.tab.active .shape { fill: #eeeeee; }
.fav { width: 32px; height: 32px; flex: none; margin-right: 12px; }
.tab span { flex: 1; min-width: 0; overflow: hidden; white-space: nowrap; line-height: 32px; -webkit-mask-image: linear-gradient(to right, #000 80%, transparent); mask-image: linear-gradient(to right, #000 80%, transparent); }
.tab:first-child span { -webkit-mask-image: none; mask-image: none; }
.tab button { width: 16px; height: 16px; margin-left: 12px; flex: none; }
.tab button svg { width: 16px; height: 16px; }
.newtab { margin: 0 0 6px -8px; flex: none; }
.profile { width: 32px; height: 32px; margin: 0 18px 18px 15px; flex: none; }

/* toolbar */
.toolbar { height: 74px; padding: 0 20px; display: flex; align-items: center; background: #eeeeee; }
.toolbar > button { width: 32px; height: 32px; margin-right: 24px; }
.toolbar > button svg { width: 32px; height: 32px; }
.omnibox { flex: 1; height: 54px; display: flex; align-items: center; padding: 0 14px; background: #fff; border: 2px solid #b8b8b8; border-radius: 4px; margin-left: -3px; }
.omnibox > svg { width: 28px; height: 28px; flex: none; }
.omnibox > svg:first-child { margin-left: -3px; }
.omnibox > .star { margin-left: 24px; }
.url {
  flex: 1;
  min-width: 0;
  height: 40px;
  margin-left: 11px;
  padding: 0;
  border: 0;
  outline: 0;
  font: 27px Inter, sans-serif;
  background: linear-gradient(to right, #161616 116px, #6b6b6b 116px);
  -webkit-background-clip: text;
  background-clip: text;
  color: transparent;
}
.ext { display: flex; gap: 24px; margin: 0 24px 0 21px; }
.ext svg { width: 32px; height: 32px; }
.glyph { font-family: Inter, sans-serif; font-weight: 700; }
.toolbar > .more { margin: 0; fill: #444; }

/* app shell */
.app { flex: 1; min-height: 0; display: flex; flex-direction: column; }
.appbar { position: relative; z-index: 1; padding: 36px; height: 144px; flex: none; background: #1678fc; color: #fff; box-shadow: 0 2px 8px rgba(0, 0, 0, .5); }
.appbar h1 { font-size: 32px; line-height: 38px; font-weight: 700; }
.appbar p { font-size: 24px; line-height: 38px; color: #b5d5ff; }
.columns { flex: 1; display: flex; min-height: 0; }
h2 { font-weight: 400; font-size: 36px; line-height: 48px; }

.sidebar { width: 451px; flex: none; padding: 36px 24px 0 36px; box-shadow: 1px 0 6px rgba(0, 0, 0, .5); }
.sidebar ul { list-style: none; margin-top: 22px; }
.sidebar li { display: flex; align-items: center; padding: 12px 0; font-size: 22px; line-height: 32px; }
.sidebar li span { width: 174px; margin-right: 8px; flex: none; }
.sidebar li button { height: 48px; padding: 0 12px; margin-right: 24px; font-weight: 700; color: #f4511e; }
.sidebar li button:last-child { margin-right: 0; }
.sidebar li .on { background: #cdcdcd; color: #10b75a; }
.sidebar li .focus { outline: 4px solid #f6995c; outline-offset: 3px; border-radius: 2px; }

.main { flex: 1; min-width: 0; padding: 36px 36px 0 35px; }
.map { position: relative; height: 600px; margin-top: 22px; border-radius: 4px; overflow: hidden; }
.canvas { display: block; width: 100%; height: 100%; }
.tile path { vector-effect: non-scaling-stroke; }
.pale path, path.pale { fill: #c9e5ca; }
.wood path, path.wood { fill: #bce48c; }
.vale path { fill: #eeefdf; }
.bare { fill: #eeeeea; }
.water path { fill: #98bbf6; }
.stream { fill: none; stroke: #8faef5; stroke-width: 3; }
.shore { fill: none; stroke: #eef0dc; stroke-width: 7; }
.minor path { fill: none; stroke: #e5e6c6; stroke-width: 3; }
.major path { fill: none; stroke: #f3e5a2; stroke-width: 3; }
.freeway { fill: none; stroke: #efb155; stroke-width: 4; }
.freeway.soft { stroke: #f3dca0; stroke-width: 3; }
.halo { fill-opacity: .38; stroke: #6b6354; stroke-opacity: .3; stroke-width: 1; }
.places { font-size: 18px; text-anchor: middle; fill: #484848; stroke: #fff; stroke-opacity: .7; stroke-width: 3px; paint-order: stroke; }
.places .small { font-size: 17px; }
.places .big { font-size: 20px; }
.places .city { font-size: 25px; fill: #8a6a3c; stroke: none; }
.places .park { font-style: italic; font-size: 19px; fill: #5b7a4b; }
.dots { fill: #fff; stroke: #666; stroke-width: 1.5px; }
.shields path { fill: #55923d; }
.shields text { font: 700 14px Roboto, sans-serif; fill: #fff; text-anchor: middle; }
.google { font: 400 30px Lato, sans-serif; stroke: #fff; stroke-width: 3px; paint-order: stroke; }

.maptype { position: absolute; left: 16px; top: 16px; display: flex; background: #fff; border-radius: 3px; box-shadow: 0 1px 4px rgba(0, 0, 0, .3); }
.maptype button { height: 44px; padding: 0 11px; font-size: 18px; color: #444; }
.maptype button + button { border-left: 1px solid #e4e4e4; }
.maptype .current { font-weight: 500; color: #000; }
.service { position: absolute; left: 784px; top: 12px; height: 48px; padding: 0 11px; background: #fff; color: #f4511e; font-size: 23px; font-weight: 500; box-shadow: 0 2px 6px rgba(0, 0, 0, .4); white-space: nowrap; }
.info { position: absolute; left: 712px; top: 137px; width: 678px; height: 137px; padding: 12px 70px 0 22px; background: #fff; border-radius: 4px; box-shadow: 0 1px 6px rgba(0, 0, 0, .6); font-size: 22px; }
.info::after { content: ""; position: absolute; left: 322px; top: 100%; border: 16px solid transparent; border-top: 38px solid #fff; border-bottom: 0; }
.info h3 { font-size: 22px; line-height: 38px; font-weight: 500; }
.info p { line-height: 32px; }
.info b, .card b { font-weight: 500; }
.info button { position: absolute; right: 20px; top: 14px; width: 16px; height: 16px; }
.controls { position: absolute; right: 14px; bottom: 34px; display: flex; flex-direction: column; gap: 16px; }
.peg, .zoom { width: 42px; background: #fff; border-radius: 3px; box-shadow: 0 1px 4px rgba(0, 0, 0, .3); }
.peg { height: 42px; }
.zoom button { width: 42px; height: 41px; }
.zoom button + button { border-top: 1px solid #e4e4e4; }
.zoom svg { width: 16px; height: 16px; }
.credits { position: absolute; right: 0; bottom: 0; display: flex; height: 20px; align-items: center; background: rgba(245, 245, 245, .6); font-size: 18px; color: #333; }
.credits a { color: inherit; text-decoration: none; border-left: 1px solid #9aa9c4; }
.credits > * { padding: 0 8px; }

.cards { display: grid; grid-template-columns: repeat(3, 1fr); gap: 22px; margin-top: 36px; }
.card { padding: 20px 25px 24px 24px; border-radius: 3px; background: #fafafa; box-shadow: 0 1px 6px rgba(0, 0, 0, .4); font-size: 22px; line-height: 32px; }
.card h3 { font-size: 32px; line-height: 44px; font-weight: 700; margin-bottom: 0; }
.chart { display: block; width: 100%; margin-top: 30px; font: 18px "Liberation Sans", Arial, sans-serif; fill: #555; }
.key-t { fill: #fbb42f; stroke: #ef9a0d; stroke-width: 4; }
.key-r { fill: #54a4ff; stroke: #1976e8; stroke-width: 4; }
.off { text-decoration: line-through; }
.grid { fill: none; stroke: #dedede; stroke-width: 2; }
.axis { fill: none; stroke: #b4b4b4; stroke-width: 2; }
.temp, .rain { fill: none; stroke: #f2a20f; stroke-width: 4; }
.rain { stroke: #0f7cf2; }
.temp-dot { fill: #f09a0c; }
.rain-dot { fill: #0f6cf2; }
.graph { margin: 17px 0 0 auto; height: 32px; gap: 14px; color: #f4511e; font-weight: 500; }
.graph svg { width: 12px; height: 8px; }
```
